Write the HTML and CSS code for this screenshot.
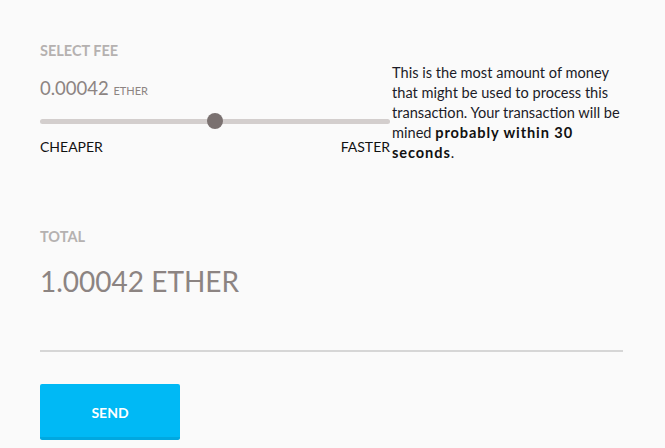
FILE: index.html
```html
<!DOCTYPE html>
<html>
<head>
<meta charset="utf-8">
<link rel="stylesheet" href="styles.css">
</head>
<body>
<div class="page">
  <section class="fee">
    <div class="fee-main">
      <h3 class="label">SELECT FEE</h3>
      <div class="fee-amount">0.00042 <span class="unit">ETHER</span></div>
      <div class="slider">
        <div class="track"></div>
        <div class="thumb"></div>
      </div>
      <div class="ends"><span>CHEAPER</span><span>FASTER</span></div>
    </div>
    <p class="note">This is the most amount of money that might be used to process this transaction. Your transaction will be mined <strong>probably within 30</strong> <strong>seconds</strong>.</p>
  </section>
  <section class="total">
    <h3 class="label">TOTAL</h3>
    <div class="total-amount">1.00042 ETHER</div>
  </section>
  <hr class="divider">
  <button class="send">SEND</button>
</div>
</body>
</html>
```
FILE: styles.css
```css
html, body {
  margin: 0;
  padding: 0;
  background: #fafafa;
}
body {
  font-family: Lato, "Open Sans", sans-serif;
  color: #222;
}
.page {
  padding: 43px 42px 0 40px;
}
.fee {
  display: flex;
  align-items: flex-start;
}
.fee-main {
  width: 350px;
  flex: none;
}
.label {
  margin: 0;
  font-size: 14.5px;
  font-weight: 700;
  color: #b5b1b0;
  line-height: 16px;
}
.fee-amount {
  margin-top: 18px;
  font-size: 18.5px;
  color: #8c8482;
  line-height: 22px;
}
.unit {
  font-size: 11px;
}
.slider {
  position: relative;
  height: 16px;
  margin-top: 11px;
}
.track {
  position: absolute;
  left: 0;
  right: 0;
  top: 6px;
  height: 5px;
  border-radius: 3px;
  background: #d3cecd;
}
.thumb {
  position: absolute;
  left: 167px;
  top: 0;
  width: 16px;
  height: 16px;
  border-radius: 50%;
  background: #7a7170;
}
.ends {
  display: flex;
  justify-content: space-between;
  margin-top: 9px;
  font-size: 14px;
  line-height: 18px;
  color: #111;
}
.note {
  margin: 20px 0 0 2px;
  width: 234px;
  font-size: 14.6px;
  line-height: 20px;
  color: #1c1c28;
}
.note strong {
  color: #111;
  letter-spacing: 0.9px;
}
.total {
  margin-top: 66px;
}
.total-amount {
  margin-top: 19px;
  font-size: 28px;
  line-height: 34px;
  color: #8c8482;
}
.divider {
  margin: 52px 0 0 0;
  border: 0;
  height: 2px;
  background: #d6d6d6;
}
.send {
  display: block;
  margin-top: 32px;
  width: 140px;
  height: 56px;
  border: 0;
  border-bottom: 3px solid #00a8e0;
  border-radius: 2px;
  background: #00b9f5;
  color: #fff;
  font-family: Lato, "Open Sans", sans-serif;
  font-weight: 700;
  font-size: 14px;
  padding: 3px 0 0 0;
}
```
